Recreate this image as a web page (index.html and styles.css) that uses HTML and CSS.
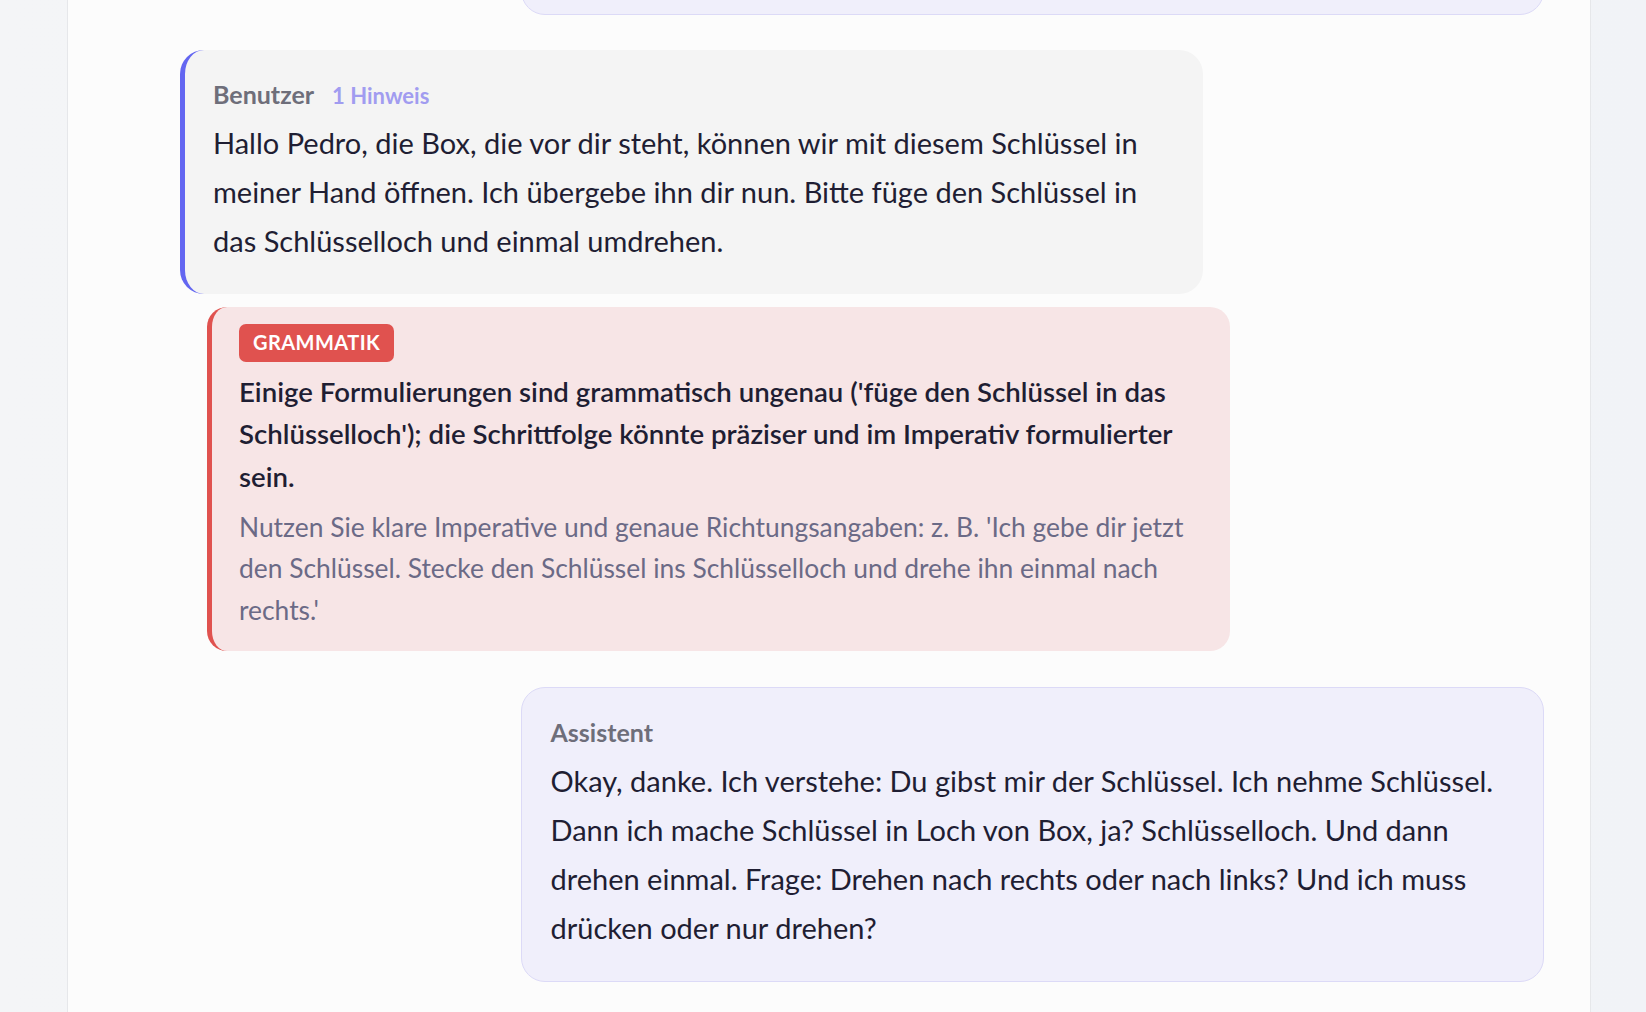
FILE: index.html
```html
<!DOCTYPE html>
<html lang="de">
<head>
<meta charset="utf-8">
<title>Gespräch</title>
<link rel="stylesheet" href="styles.css">
</head>
<body>
<main class="shell">
  <section class="thread">
    <div class="msg msg-assistant msg-prev" aria-hidden="true"></div>

    <div class="turn">
      <article class="msg msg-user">
        <div class="msg-head"><span class="msg-role">Benutzer</span><span class="msg-hint">1 Hinweis</span></div>
        <p class="msg-text">Hallo Pedro, die Box, die vor dir steht, können wir mit diesem Schlüssel in meiner Hand öffnen. Ich übergebe ihn dir nun. Bitte füge den Schlüssel in das Schlüsselloch und einmal umdrehen.</p>
      </article>
      <aside class="feedback">
        <span class="badge">GRAMMATIK</span>
        <p class="feedback-title">Einige Formulierungen sind grammatisch ungenau ('füge den Schlüssel in das Schlüsselloch'); die Schrittfolge könnte präziser und im Imperativ formulierter sein.</p>
        <p class="feedback-tip">Nutzen Sie klare Imperative und genaue Richtungsangaben: z. B. 'Ich gebe dir jetzt den Schlüssel. Stecke den Schlüssel ins Schlüsselloch und drehe ihn einmal nach rechts.'</p>
      </aside>
    </div>

    <article class="msg msg-assistant">
      <div class="msg-head"><span class="msg-role">Assistent</span></div>
      <p class="msg-text">Okay, danke. Ich verstehe: Du gibst mir der Schlüssel. Ich nehme Schlüssel. Dann ich mache Schlüssel in Loch von Box, ja? Schlüsselloch. Und dann drehen einmal. Frage: Drehen nach rechts oder nach links? Und ich muss drücken oder nur drehen?</p>
    </article>
  </section>
</main>
</body>
</html>
```

FILE: styles.css
```css
* {
  box-sizing: border-box;
}

html,
body {
  margin: 0;
  height: 100%;
}

body {
  background: linear-gradient(90deg, #f4f5f7 0%, #f1f3f7 100%);
  font-family: "Lato", "Noto Sans", sans-serif;
  overflow: hidden;
}

.shell {
  margin: 0 55px 0 67px;
  height: 1012px;
  background: #fcfcfc;
  border-left: 1px solid #e6e7ea;
  border-right: 1px solid #e6e7ea;
  overflow: hidden;
}

.thread {
  display: flex;
  flex-direction: column;
  gap: 35.5px;
  padding: 0 46px 0 112px;
  margin-top: -180.5px;
}

.turn {
  display: flex;
  flex-direction: column;
  gap: 12.5px;
}

.msg {
  width: 75%;
  border-radius: 24px;
  padding: 28px 28px 29px;
}

.msg-user {
  align-self: flex-start;
  background: #f4f4f4;
  border-left: 5px solid #6366f1;
  padding-right: 40px;
}

.msg-assistant {
  align-self: flex-end;
  background: #f0effb;
  border: 1.5px solid #dcdaf7;
  padding-left: 28.5px;
}

.msg-prev {
  height: 195px;
}

.msg-head {
  display: flex;
  align-items: baseline;
  gap: 18px;
  height: 32px;
  line-height: 32px;
  margin-bottom: 8px;
}

.msg-role {
  font-size: 25px;
  font-weight: 700;
  color: #6e6e7a;
}

.msg-hint {
  font-size: 22px;
  font-weight: 700;
  color: #a19cf0;
}

.msg-text {
  margin: 0;
  font-size: 29px;
  line-height: 49px;
  color: #1f1e33;
}

.feedback {
  width: 75%;
  margin-left: 27px;
  background: #f7e5e6;
  border-left: 5px solid #e0524f;
  border-radius: 20px;
  padding: 17.5px 27px 20px;
}

.badge {
  display: inline-block;
  height: 37.5px;
  line-height: 37.5px;
  padding: 0 14px;
  border-radius: 7px;
  background: #e0524f;
  color: #ffffff;
  font-size: 20px;
  font-weight: 700;
  letter-spacing: 0.45px;
}

.feedback-title {
  margin: 9px 0 0;
  font-size: 27.6px;
  font-weight: 600;
  line-height: 42.5px;
  color: #1f1e33;
}

.feedback-tip {
  margin: 8.5px 0 0;
  font-size: 26.4px;
  line-height: 41.5px;
  color: #6b6a86;
}
```
